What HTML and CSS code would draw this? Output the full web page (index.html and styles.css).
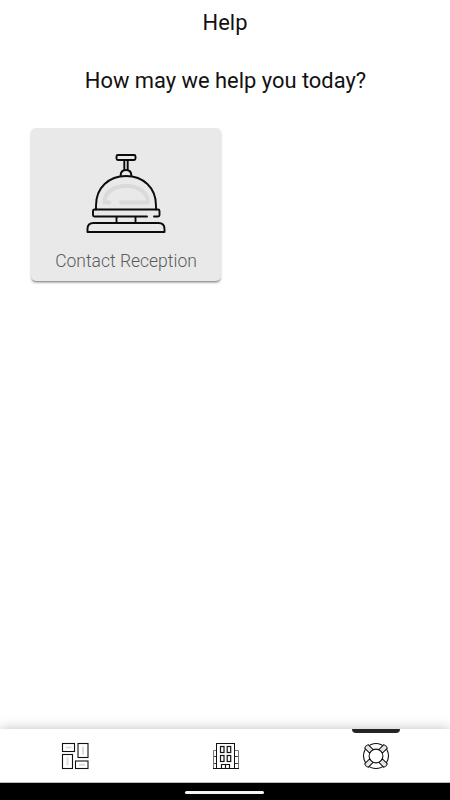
FILE: index.html
```
<!DOCTYPE html>
<html lang="en">
<head>
    <meta charset="UTF-8">
    <meta name="viewport" content="width=device-width, initial-scale=1.0">
    <title>Help</title>
    <link rel="stylesheet" href="styles.css">
</head>
<body>
    <div class="container">
        <header class="header">Help</header>
        <main class="content">
            <h1 class="question">How may we help you today?</h1>
            <div class="cards">
                <div class="card">
                    <svg class="bell" viewBox="0 0 84 84" fill="none">
                        <g stroke="#dadada" stroke-width="4" stroke-linecap="round" stroke-linejoin="round">
                            <path d="M25.500 50.500H20.500C20.500 41 29 34 42 34S64 41 64 50.500H37"/>
                        </g>
                        <g stroke="#0b0b0b" stroke-width="1.900" stroke-linejoin="round" stroke-linecap="round">
                            <rect x="32.500" y="3" width="19" height="5" rx="1.500"/>
                            <path d="M40.300 8v10M43.700 8v10"/>
                            <path d="M36.700 23.500c0-3.500 2-5.500 5.300-5.500s5.300 2 5.300 5.500"/>
                            <path d="M12 57.500V53.500C12 35.500 25 24 42 24S72 35.500 72 53.500v4"/>
                            <path d="M63 64.500H10.500q-1.500 0-1.500-1.500v-4q0-1.500 1.500-1.500h63.500q1.500 0 1.500 1.500v4q0 1.500-1.500 1.500H70"/>
                            <path d="M32.500 65v6M51.500 65v6"/>
                            <path d="M3.500 80v-3q0-6 6-6h65q6 0 6 6v3z"/>
                        </g>
                    </svg>
                    <div class="card_title">Contact Reception</div>
                </div>
            </div>
        </main>
        <nav class="tabs">
            <div class="tab">
                <svg class="icon" viewBox="0 0 28 28" fill="none">
                    <g stroke="#111" stroke-width="1.100">
                        <rect x="1.500" y="1.500" width="12" height="8"/>
                        <rect x="17" y="1.500" width="10" height="14"/>
                        <rect x="1.500" y="12.500" width="10" height="14"/>
                        <rect x="14.500" y="19" width="12.500" height="7.500"/>
                    </g>
                    <path d="M4.500 5.500h6M22 4.500v8M6.500 15.500v8M18 22.800h6" stroke="#dcdcdc" stroke-width="2"/>
                </svg>
            </div>
            <div class="tab">
                <svg class="icon" viewBox="0 0 28 28" fill="none">
                    <path d="M5 8.500H1.500v18M23 8.500h3.500v18" stroke="#777"/>
                    <path d="M2 14.500H5M2 21.500H5M23 14.500h3M23 21.500h3" stroke="#444"/>
                    <path d="M4.500 2v24.500M22.500 2v24.500M4 1.500h19M1 26.500h26" stroke="#111"/>
                    <g stroke="#151515" stroke-width="1.200">
                        <rect x="8.500" y="4.500" width="3.500" height="6"/>
                        <rect x="15.200" y="4.500" width="3.500" height="6"/>
                        <rect x="8.500" y="13.500" width="3.500" height="6"/>
                        <rect x="15.200" y="13.500" width="3.500" height="6"/>
                        <path d="M9.500 26v-3.500h8V26M13.500 22.500V26"/>
                    </g>
                </svg>
            </div>
            <div class="tab active">
                <svg class="icon" viewBox="0 0 28 28" fill="none">
                    <circle cx="14" cy="14" r="12.500" stroke="#111" stroke-width="1.100"/>
                    <circle cx="14" cy="14" r="6.900" stroke="#111" stroke-width="1.100"/>
                    <g fill="#e6e6e6" stroke="#111" stroke-width="1" stroke-linejoin="round">
                        <path id="strap" d="M11.500 .400q2.500-1 5 0V7.500q-2.500-1-5 0z" transform="rotate(45 14 14)"/>
                        <use href="#strap" transform="rotate(90 14 14)"/>
                        <use href="#strap" transform="rotate(180 14 14)"/>
                        <use href="#strap" transform="rotate(270 14 14)"/>
                    </g>
                </svg>
            </div>
        </nav>
        <div class="system_bar"><div class="handle"></div></div>
    </div>
</body>
</html>
```
FILE: styles.css
```
*{
    margin: 0;
    padding: 0;
    box-sizing: border-box;
    font-family: Roboto, sans-serif;
}
body{
    background: #fff;
    color: #111;
}
.container{
    height: 100vh;
    display: flex;
    flex-direction: column;
    overflow: hidden;
}
.header{
    height: 45px;
    line-height: 45px;
    text-align: center;
    font-size: 21.900px;
}
.content{
    flex: 1;
    padding: 21px 31px 0;
}
.question{
    height: 30px;
    line-height: 30px;
    padding-left: 1px;
    text-align: center;
    font-size: 21.900px;
    font-weight: 400;
    white-space: nowrap;
}
.cards{
    display: flex;
    margin-top: 32px;
}
.card{
    width: 190px;
    height: 153px;
    padding-top: 24px;
    display: flex;
    flex-direction: column;
    align-items: center;
    background: #e9e9e9;
    border-radius: 5px;
    box-shadow: 0 2px 3px -1px rgba(0, 0, 0, 0.6);
}
.bell{
    width: 84px;
    height: 84px;
}
.card_title{
    margin-top: 13px;
    line-height: 24px;
    font-size: 17.500px;
    font-weight: 300;
    color: #5a5a5a;
    white-space: nowrap;
}
.tabs{
    height: 54px;
    display: grid;
    grid-template-columns: 150px 152px 148px;
    background: #fff;
    border-bottom: 1px solid #bbb;
    box-shadow: 0 0 12px rgba(0, 0, 0, 0.25);
}
.tab{
    display: flex;
    justify-content: center;
    align-items: center;
    position: relative;
}
.active::before{
    content: "";
    position: absolute;
    top: 0;
    width: 48px;
    height: 4px;
    background: #262324;
    border-radius: 0 0 5px 5px;
}
.icon{
    width: 28px;
    height: 28px;
}
.system_bar{
    height: 17px;
    display: flex;
    justify-content: center;
    align-items: center;
    background: #000;
    position: relative;
}
.handle{
    width: 79px;
    height: 3px;
    margin-right: 1px;
    margin-top: 1px;
    background: #f4f4f4;
    border-radius: 2px;
}
```
